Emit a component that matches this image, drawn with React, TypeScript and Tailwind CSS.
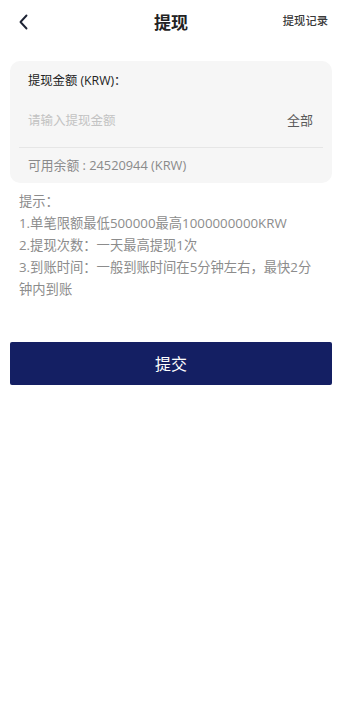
import React from "react";

export default function App() {
  return (
    <div
      className="w-[342px] min-h-[703px] bg-white text-[#333]"
      style={{ fontFamily: '"Open Sans", "Noto Sans CJK SC", sans-serif' }}
    >
      <div className="relative h-[44px] flex items-center justify-center">
        <div className="absolute left-[18px] top-[14px]">
          <svg width="11" height="16" viewBox="0 0 11 16" fill="none">
            <path d="M8.5 1.5 L2.5 8 L8.5 14.5" stroke="#1c2233" strokeWidth="1.9" strokeLinecap="round" strokeLinejoin="round" />
          </svg>
        </div>
        <div className="text-[17px] font-bold text-[#222] leading-none">提现</div>
        <div className="absolute right-[14px] top-[15px] text-[11.3px] font-medium text-[#3a3a3a] leading-none">提现记录</div>
      </div>

      <div className="mx-[10px] mt-[17px] rounded-[10px] bg-[#f6f6f6] px-[18px] pt-[10px] pb-[8px]">
        <div className="text-[12.3px] text-[#222] leading-[20px]">提现金额 (KRW)：</div>
        <div className="flex items-center justify-between h-[56px] pt-[4px]">
          <span className="text-[12.5px] text-[#c3c3c3]">请输入提现金额</span>
          <span className="text-[13px] text-[#5a5a5a] mr-[1px]">全部</span>
        </div>
        <div className="h-px bg-[#e6e6e6] -mx-[9px]" />
        <div className="text-[12.8px] text-[#8a8a8a] leading-[20px] pt-[7px]">可用余额 : 24520944 (KRW)</div>
      </div>

      <div className="pl-[19px] pr-[24px] pt-[7px] text-[13.3px] text-[#8c8c8c] leading-[22px]">
        <div>提示：</div>
        <div>1.单笔限额最低500000最高1000000000KRW</div>
        <div>2.提现次数：一天最高提现1次</div>
        <div>3.到账时间：一般到账时间在5分钟左右，最快2分钟内到账</div>
      </div>

      <div className="mx-[10px] mt-[42px] h-[43px] rounded-[2px] bg-[#141f63] flex items-center justify-center text-white text-[16px]">
        提交
      </div>
    </div>
  );
}
